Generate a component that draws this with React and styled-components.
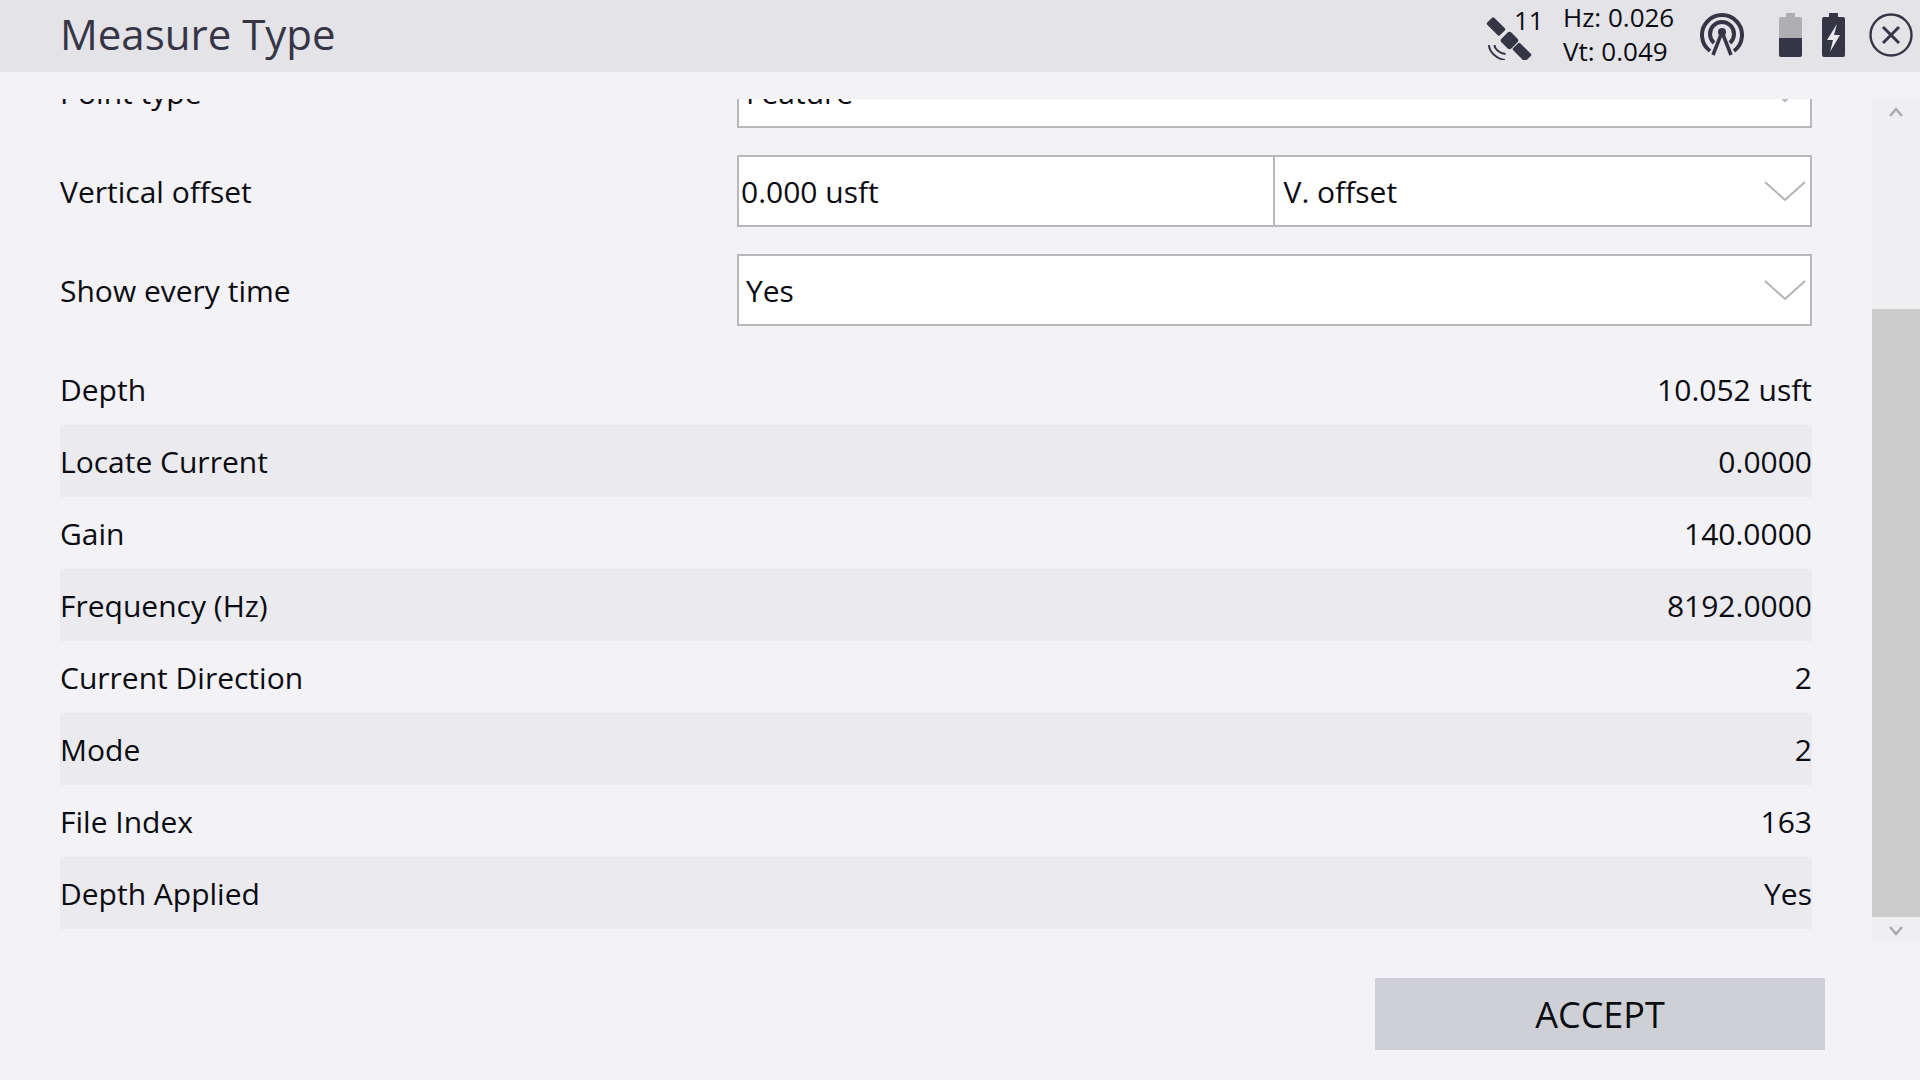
import React from "react";
import styled, { createGlobalStyle } from "styled-components";

const Global = createGlobalStyle`
  html, body { margin: 0; padding: 0; }
  body { background: #f2f2f7; font-family: "Open Sans", "Noto Sans", sans-serif; color: #0b0b12; overflow: hidden; }
`;
const Page = styled.div`
  width: 1920px; height: 1080px; display: flex; flex-direction: column; background: #f2f2f7; overflow: hidden;
`;
const Header = styled.header`
  height: 72px; flex: none; background: #e3e3e8; display: flex; align-items: center; padding: 0 7px 0 60px;
`;
const Title = styled.h1`
  margin: -5px 0 0; flex: 1; font-size: 42px; font-weight: 400; color: #363545; line-height: 72px;
`;
const Status = styled.div`display: flex; align-items: center;`;
const SatWrap = styled.div`position: relative; width: 60px; height: 50px; margin-right: 22px;`;
const SatCount = styled.span`
  position: absolute; left: 33px; top: -9px; font-size: 26px; line-height: 36px;
`;
const Precision = styled.div`
  width: 135px; font-size: 26px; line-height: 34px; margin-top: -4px;
`;
const IconSlot = styled.span`
  display: flex; margin: ${p => p.$mt}px 0 0 ${p => p.$ml}px;
`;
const Body = styled.main`
  flex: none; height: 844px; margin-top: 27px; display: flex; overflow: hidden;
`;
const Scroller = styled.div`flex: 1; padding: 0 60px; overflow: hidden;`;
const Content = styled.div`margin-top: -43px;`;
const FormRow = styled.div`
  height: 72px; margin-bottom: 27px; display: flex; align-items: center;
`;
const Label = styled.div`width: 677px; font-size: 30px; flex: none;`;
const Fields = styled.div`
  flex: 1; height: 100%; display: grid; grid-template-columns: ${p => (p.$split ? "1fr 1fr" : "1fr")};
`;
const TextBox = styled.div`
  box-sizing: border-box; height: 72px; border: 2px solid #b8b8bb; background: #fff;
  display: flex; align-items: center; padding-left: 2px; font-size: 30px;
`;
const Select = styled.div`
  box-sizing: border-box; height: 72px; border: 2px solid #b8b8bb; background: #fff;
  margin-left: ${p => (p.$joined ? "-2px" : "0")};
  display: flex; align-items: center; justify-content: space-between;
  padding: 0 4px 0 ${p => (p.$joined ? 9 : 7)}px; font-size: 30px;
`;
const ChevronSvg = styled.svg`margin-top: 2px;`;
const DataRow = styled.div`
  height: 72px; display: flex; align-items: center; justify-content: space-between; font-size: 30px;
  background: ${p => (p.$striped ? "#eaeaef" : "transparent")};
`;
const Scrollbar = styled.div`
  width: 48px; flex: none; background: #efeff1; display: flex; flex-direction: column;
`;
const ScrollButton = styled.div`
  height: ${p => p.$h}px; flex: none; display: flex; justify-content: center; padding-top: ${p => p.$pt}px; box-sizing: border-box;
`;
const Thumb = styled.div`height: 608px; flex: none; background: #cccccc;`;
const Footer = styled.footer`
  flex: 1; display: flex; justify-content: flex-end; align-items: flex-start; padding: 35px 95px 0 0;
`;
const Accept = styled.button`
  width: 450px; height: 72px; border: 0; background: #cfd0d5; font: 400 36px "Open Sans", sans-serif; color: #0b0b12; padding: 0;
`;

const Chevron = () => (
  <ChevronSvg width="42" height="22" viewBox="0 0 42 22" fill="none" stroke="#b3b3b6" strokeWidth="2"><path d="M1 1l20 18L41 1" /></ChevronSvg>
);
const SmallChevron = ({ up }) => (
  <svg width="14" height="10" viewBox="0 0 14 10" fill="none" stroke="#a9a9ac" strokeWidth="2.400"><path d={up ? "M1 9l6-7 6 7" : "M1 1l6 7 6-7"} /></svg>
);
const SatelliteSvg = styled.svg`position: absolute; left: 0; top: -1px;`;
const Satellite = () => (
  <SatelliteSvg width="52" height="50" viewBox="0 0 52 50" fill="#363545">
    <rect x="6" y="11.500" width="18" height="10" rx="1.500" transform="rotate(45 15 16.500)" />
    <rect x="21.500" y="23.500" width="14" height="14" rx="3" transform="rotate(45 28.500 30.500)" />
    <rect x="32" y="37" width="18" height="10" rx="1.500" transform="rotate(45 41 42)" />
    <path d="M8 35c0 7 8 14 16 15M13.500 35c0 4 6 9 11 9" fill="none" stroke="#363545" strokeWidth="2" />
  </SatelliteSvg>
);
const Antenna = () => (
  <svg width="44" height="44" viewBox="0 0 44 44" fill="none" stroke="#363545" strokeWidth="4">
    <path d="M10 39A20 20 0 1 1 34 39" />
    <path d="M14 31A12 12 0 1 1 30 31" />
    <path d="M22 20L13 43M22 20l9 23" strokeWidth="3.500" />
    <circle cx="22" cy="20" r="4" fill="#363545" stroke="none" />
  </svg>
);
const Battery = () => (
  <svg width="23" height="44" viewBox="0 0 23 44">
    <path d="M7 0h9v4h5a2 2 0 0 1 2 2v19H0V6a2 2 0 0 1 2-2h5z" fill="#aeaeb3" />
    <path d="M0 25h23v17a2 2 0 0 1-2 2H2a2 2 0 0 1-2-2z" fill="#363545" />
  </svg>
);
const Charging = () => (
  <svg width="23" height="44" viewBox="0 0 23 44">
    <path d="M7 0h9v4h5a2 2 0 0 1 2 2v36a2 2 0 0 1-2 2H2a2 2 0 0 1-2-2V6a2 2 0 0 1 2-2h5z" fill="#363545" />
    <path d="M15 11L5 27h6l-3 12 10-17h-6z" fill="#e9e9ee" />
  </svg>
);
const CloseIcon = () => (
  <svg width="44" height="44" viewBox="0 0 44 44" fill="none" stroke="#363545">
    <circle cx="22" cy="22" r="20.500" strokeWidth="2.400" />
    <path d="M14 14l16 16M30 14L14 30" strokeWidth="3" />
  </svg>
);

const rows = [
  ["Depth", "10.052 usft"],
  ["Locate Current", "0.0000"],
  ["Gain", "140.0000"],
  ["Frequency (Hz)", "8192.0000"],
  ["Current Direction", "2"],
  ["Mode", "2"],
  ["File Index", "163"],
  ["Depth Applied", "Yes"],
];

export default function App() {
  return (
    <Page>
      <Global />
      <Header>
        <Title>Measure Type</Title>
        <Status>
          <SatWrap><Satellite /><SatCount>11</SatCount></SatWrap>
          <Precision><div>Hz: 0.026</div><div>Vt: 0.049</div></Precision>
          <IconSlot $ml={2} $mt={-4}><Antenna /></IconSlot>
          <IconSlot $ml={35} $mt={-3}><Battery /></IconSlot>
          <IconSlot $ml={20} $mt={-3}><Charging /></IconSlot>
          <IconSlot $ml={24} $mt={-3}><CloseIcon /></IconSlot>
        </Status>
      </Header>
      <Body>
        <Scroller>
          <Content>
            <FormRow>
              <Label>Point type</Label>
              <Fields><Select>Feature<Chevron /></Select></Fields>
            </FormRow>
            <FormRow>
              <Label>Vertical offset</Label>
              <Fields $split>
                <TextBox>0.000 usft</TextBox>
                <Select $joined>V. offset<Chevron /></Select>
              </Fields>
            </FormRow>
            <FormRow>
              <Label>Show every time</Label>
              <Fields><Select>Yes<Chevron /></Select></Fields>
            </FormRow>
            {rows.map(([k, v], i) => (
              <DataRow key={k} $striped={i % 2 === 1}><span>{k}</span><span>{v}</span></DataRow>
            ))}
          </Content>
        </Scroller>
        <Scrollbar>
          <ScrollButton $h={210} $pt={8}><SmallChevron up /></ScrollButton>
          <Thumb />
          <ScrollButton $h={26} $pt={9}><SmallChevron /></ScrollButton>
        </Scrollbar>
      </Body>
      <Footer><Accept>ACCEPT</Accept></Footer>
    </Page>
  );
}
